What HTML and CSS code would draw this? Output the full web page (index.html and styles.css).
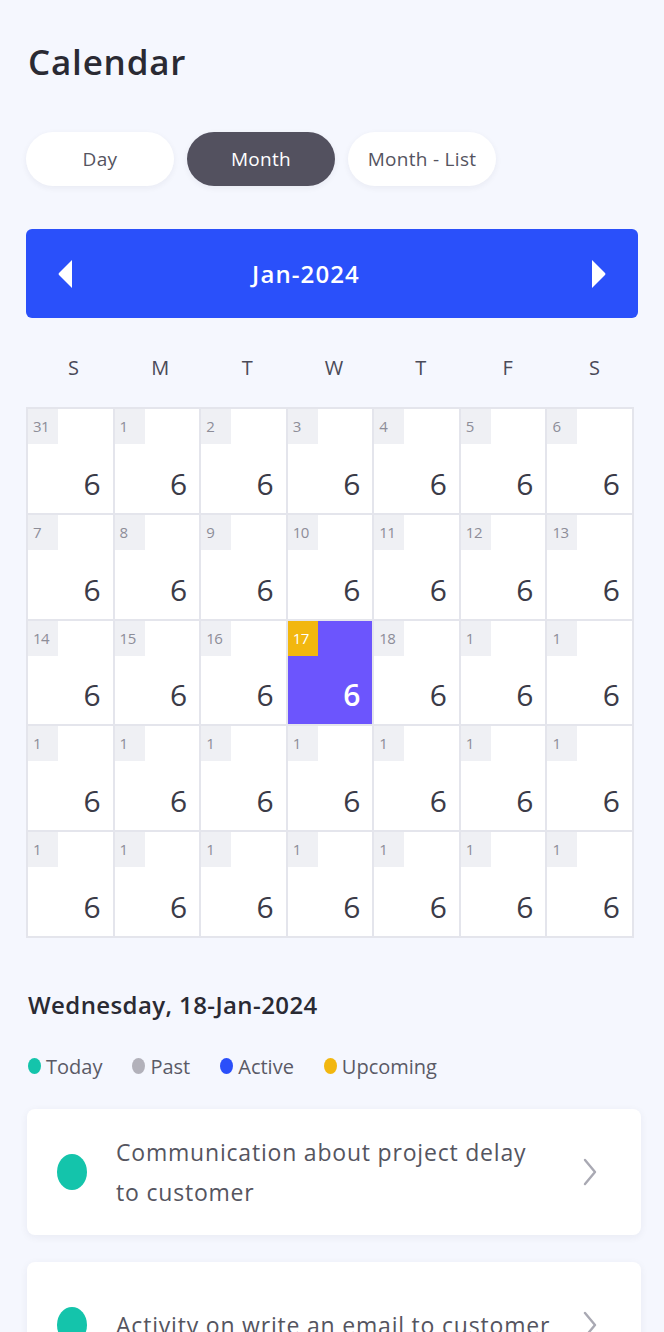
FILE: index.html
```html
<!DOCTYPE html>
<html>
<head>
<meta charset="utf-8">
<link rel="stylesheet" href="styles.css">
</head>
<body>
<div class="page">
  <h1 class="title">Calendar</h1>
  <div class="tabs">
    <button class="tab">Day</button>
    <button class="tab active">Month</button>
    <button class="tab">Month - List</button>
  </div>
  <div class="month-bar">
    <svg class="arrow" width="16" height="30" viewBox="0 0 16 30"><path d="M15 1 L15 29 L2 16 Q1 15 2 14 Z" fill="#fff"/></svg>
    <span class="month-label">Jan-2024</span>
    <svg class="arrow" width="16" height="30" viewBox="0 0 16 30"><path d="M1 1 L1 29 L14 16 Q15 15 14 14 Z" fill="#fff"/></svg>
  </div>
  <div class="weekdays">
    <span>S</span><span>M</span><span>T</span><span>W</span><span>T</span><span>F</span><span>S</span>
  </div>
  <div class="grid">
    <div class="cell"><span class="badge">31</span><span class="count">6</span></div>
    <div class="cell"><span class="badge">1</span><span class="count">6</span></div>
    <div class="cell"><span class="badge">2</span><span class="count">6</span></div>
    <div class="cell"><span class="badge">3</span><span class="count">6</span></div>
    <div class="cell"><span class="badge">4</span><span class="count">6</span></div>
    <div class="cell"><span class="badge">5</span><span class="count">6</span></div>
    <div class="cell"><span class="badge">6</span><span class="count">6</span></div>

    <div class="cell"><span class="badge">7</span><span class="count">6</span></div>
    <div class="cell"><span class="badge">8</span><span class="count">6</span></div>
    <div class="cell"><span class="badge">9</span><span class="count">6</span></div>
    <div class="cell"><span class="badge">10</span><span class="count">6</span></div>
    <div class="cell"><span class="badge">11</span><span class="count">6</span></div>
    <div class="cell"><span class="badge">12</span><span class="count">6</span></div>
    <div class="cell"><span class="badge">13</span><span class="count">6</span></div>

    <div class="cell"><span class="badge">14</span><span class="count">6</span></div>
    <div class="cell"><span class="badge">15</span><span class="count">6</span></div>
    <div class="cell"><span class="badge">16</span><span class="count">6</span></div>
    <div class="cell selected"><span class="badge">17</span><span class="count">6</span></div>
    <div class="cell"><span class="badge">18</span><span class="count">6</span></div>
    <div class="cell"><span class="badge">1</span><span class="count">6</span></div>
    <div class="cell"><span class="badge">1</span><span class="count">6</span></div>

    <div class="cell"><span class="badge">1</span><span class="count">6</span></div>
    <div class="cell"><span class="badge">1</span><span class="count">6</span></div>
    <div class="cell"><span class="badge">1</span><span class="count">6</span></div>
    <div class="cell"><span class="badge">1</span><span class="count">6</span></div>
    <div class="cell"><span class="badge">1</span><span class="count">6</span></div>
    <div class="cell"><span class="badge">1</span><span class="count">6</span></div>
    <div class="cell"><span class="badge">1</span><span class="count">6</span></div>

    <div class="cell"><span class="badge">1</span><span class="count">6</span></div>
    <div class="cell"><span class="badge">1</span><span class="count">6</span></div>
    <div class="cell"><span class="badge">1</span><span class="count">6</span></div>
    <div class="cell"><span class="badge">1</span><span class="count">6</span></div>
    <div class="cell"><span class="badge">1</span><span class="count">6</span></div>
    <div class="cell"><span class="badge">1</span><span class="count">6</span></div>
    <div class="cell"><span class="badge">1</span><span class="count">6</span></div>
  </div>

  <h2 class="date-title">Wednesday, 18-Jan-2024</h2>
  <div class="legend">
    <span class="legend-item"><i class="ldot today"></i>Today</span>
    <span class="legend-item"><i class="ldot past"></i>Past</span>
    <span class="legend-item"><i class="ldot activec"></i>Active</span>
    <span class="legend-item"><i class="ldot upcoming"></i>Upcoming</span>
  </div>

  <div class="cards">
    <div class="card">
      <i class="cdot"></i>
      <p class="card-text">Communication about project delay to customer</p>
      <svg class="chev" width="14" height="28" viewBox="0 0 14 28"><path d="M2 2 L12 14 L2 26" fill="none" stroke="#a9a9b3" stroke-width="2.4" stroke-linecap="round" stroke-linejoin="round"/></svg>
    </div>
    <div class="card">
      <i class="cdot"></i>
      <p class="card-text">Activity on write an email to customer</p>
      <svg class="chev" width="14" height="28" viewBox="0 0 14 28"><path d="M2 2 L12 14 L2 26" fill="none" stroke="#a9a9b3" stroke-width="2.4" stroke-linecap="round" stroke-linejoin="round"/></svg>
    </div>
  </div>
</div>
</body>
</html>
```

FILE: styles.css
```css
* { box-sizing: border-box; }
html, body { margin: 0; padding: 0; }
body {
  background: #f5f7fe;
  font-family: "Open Sans", "Noto Sans", sans-serif;
  color: #2b2b35;
  width: 664px;
  height: 1332px;
  overflow: hidden;
}
.page {
  padding: 38px 26px 0 26px;
}
.title {
  margin: 0 0 0 2px;
  font-size: 35px;
  font-weight: 600;
  line-height: 48px;
  color: #2a2a33;
  letter-spacing: 0.8px;
}
.tabs {
  display: flex;
  gap: 13px;
  margin-top: 46px;
}
.tab {
  width: 148px;
  height: 54px;
  border: none;
  border-radius: 27px;
  background: #fff;
  box-shadow: 0 2px 6px rgba(30, 30, 60, 0.06);
  font-family: inherit;
  font-size: 19px;
  letter-spacing: 0.3px;
  color: #55545f;
  padding: 0;
}
.tab.active {
  background: #53515f;
  color: #fff;
  font-weight: 500;
}
.month-bar {
  margin-top: 43px;
  height: 89px;
  background: #2a50fa;
  border-radius: 6px;
  display: flex;
  align-items: center;
  justify-content: space-between;
  padding: 0 31px 0 31px;
}
.month-label {
  color: #fff;
  font-size: 24px;
  font-weight: 600;
  letter-spacing: 1.1px;
  margin-right: 52px;
}
.arrow { display: block; }
.weekdays {
  display: grid;
  grid-template-columns: repeat(7, 1fr);
  width: 608px;
  height: 89px;
  padding-top: 10px;
  align-items: center;
  text-align: center;
  font-size: 20px;
  color: #4a4a58;
}
.weekdays span { padding-left: 8px; }
.grid {
  display: grid;
  grid-template-columns: repeat(7, 1fr);
  width: 608px;
  border: 1px solid #e4e5ec;
}
.cell {
  height: 105.8px;
  background: #fff;
  border: 1px solid #e4e5ec;
  display: flex;
  flex-direction: column;
  justify-content: space-between;
  align-items: flex-start;
}
.badge {
  width: 30px;
  height: 35px;
  background: #eff0f4;
  color: #8d8d98;
  font-size: 15px;
  line-height: 35px;
  padding-left: 5px;
  letter-spacing: -0.5px;
}
.count {
  align-self: flex-end;
  font-size: 30px;
  line-height: 30px;
  margin: 0 12px 14px 0;
  color: #3b3b48;
}
.cell.selected {
  background: #6c55fd;
}
.cell.selected .badge {
  background: #f2b70f;
  color: #fff;
}
.cell.selected .count {
  color: #fff;
  font-weight: 600;
}
.date-title {
  margin: 52px 0 0 2px;
  font-size: 24px;
  font-weight: 600;
  line-height: 30px;
  color: #2a2a33;
  letter-spacing: 0.4px;
}
.legend {
  display: flex;
  gap: 30px;
  margin: 33px 0 0 2px;
  font-size: 20px;
  color: #5a5a66;
}
.legend-item {
  display: flex;
  align-items: center;
  gap: 5px;
}
.ldot {
  display: inline-block;
  width: 13px;
  height: 16px;
  border-radius: 50%;
}
.ldot.today { background: #14c4ab; }
.ldot.past { background: #b2b1ba; }
.ldot.activec { background: #2a4ffa; }
.ldot.upcoming { background: #f2b70f; }
.cards {
  display: flex;
  flex-direction: column;
  gap: 27px;
  margin-top: 29px;
  width: 614px;
  margin-left: 1px;
}
.card {
  background: #fff;
  border-radius: 8px;
  box-shadow: 0 2px 8px rgba(30, 30, 60, 0.06);
  min-height: 126px;
  display: flex;
  align-items: center;
  padding: 0 44px 0 30px;
}
.cdot {
  flex: none;
  width: 30px;
  height: 36px;
  border-radius: 50%;
  background: #14c4ab;
  margin-right: 29px;
}
.card-text {
  flex: 1;
  margin: 0;
  font-size: 23px;
  line-height: 40px;
  letter-spacing: 0.8px;
  color: #55555f;
  padding-right: 30px;
}
.chev { flex: none; }
```
